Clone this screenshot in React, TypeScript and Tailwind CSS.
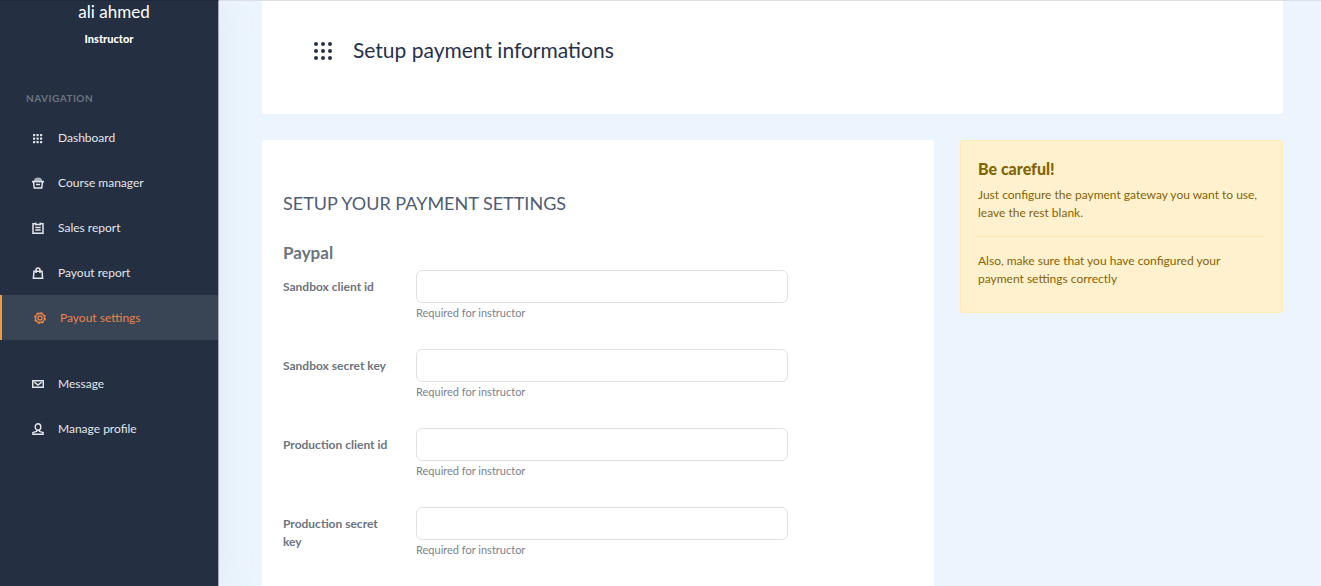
import React from 'react';

type IconProps = { className?: string };

// 3x3 dot grid of the page header
const DotsIcon: React.FC<IconProps> = ({ className }) => (
  <svg viewBox="0 0 18 18" fill="currentColor" className={className} aria-hidden="true">
    {[2, 9, 16].map((y) => [2, 9, 16].map((x) => <circle key={`${x}-${y}`} cx={x} cy={y} r="2" />))}
  </svg>
);

const GridIcon: React.FC = () => (
  <svg viewBox="0 0 12 12" fill="currentColor" className="size-3" aria-hidden="true">
    {[2, 5.5, 9].map((y) => [1, 4.5, 8].map((x) => <rect key={`${x}-${y}`} x={x} y={y} width="2.2" height="2.2" rx="0.4" />))}
  </svg>
);

const BasketIcon: React.FC = () => (
  <svg viewBox="0 0 12 12" className="size-3" aria-hidden="true">
    <path d="M1.800 4C2 1.500 3.700.5 6 .5s4 1 4.200 3.500z" fill="currentColor" opacity="0.7" />
    <path d="M0 4.600h12" stroke="currentColor" strokeWidth="1.600" />
    <path d="M1.400 4.500l.9 6.600h7.400l.9-6.600M4 7.600h4" fill="none" stroke="currentColor" strokeWidth="1.500" />
  </svg>
);

const ClipboardIcon: React.FC = () => (
  <svg viewBox="0 0 12 12" fill="none" stroke="currentColor" className="size-3" aria-hidden="true">
    <path d="M3.500 1.700H1v9.600h10V1.700H8.500" strokeWidth="1.500" />
    <path d="M3.800.5v3M8.200.5v3M4.500 2.500h3M3.300 5.500h5.400M3.300 8h5.400" strokeWidth="1.400" />
  </svg>
);

const BagIcon: React.FC = () => (
  <svg viewBox="0 0 12 12" fill="none" stroke="currentColor" strokeWidth="1.500" className="size-3" aria-hidden="true">
    <path d="M2 4.300h8l.6 6.900H1.400z" />
    <path d="M4 6V3a2 2 0 0 1 4 0v3" />
  </svg>
);

const GearIcon: React.FC = () => (
  <svg viewBox="0 0 12 12" fill="none" stroke="currentColor" className="size-3" aria-hidden="true">
    <circle cx="6" cy="6" r="4.500" strokeWidth="1.400" />
    <circle cx="6" cy="6" r="5.300" strokeWidth="1.300" strokeDasharray="2.200 1.960" />
    <circle cx="6" cy="6" r="2" strokeWidth="1.300" />
  </svg>
);

const MailIcon: React.FC = () => (
  <svg viewBox="0 0 12 12" fill="none" stroke="currentColor" strokeWidth="1.500" className="size-3" aria-hidden="true">
    <path d="M.7 2.700h10.600v6.600H.7z" />
    <path d="M2.300 4.200L6 7l3.700-2.800" />
  </svg>
);

const ProfileIcon: React.FC = () => (
  <svg viewBox="0 0 12 12" fill="none" stroke="currentColor" strokeWidth="1.400" className="size-3" aria-hidden="true">
    <ellipse cx="6" cy="4" rx="2.800" ry="3.200" />
    <path d="M4.700 7v1.300L.9 9.500v1.700h10.200V9.500L7.300 8.300V7" />
  </svg>
);

const navItems = [
  { label: 'Dashboard', icon: GridIcon },
  { label: 'Course manager', icon: BasketIcon },
  { label: 'Sales report', icon: ClipboardIcon },
  { label: 'Payout report', icon: BagIcon },
  { label: 'Payout settings', icon: GearIcon, active: true },
];

const accountItems = [
  { label: 'Message', icon: MailIcon },
  { label: 'Manage profile', icon: ProfileIcon },
];

const fields = [
  { id: 'sandbox_client_id', label: 'Sandbox client id' },
  { id: 'sandbox_secret_key', label: 'Sandbox secret key' },
  { id: 'production_client_id', label: 'Production client id' },
  { id: 'production_secret_key', label: 'Production secret key' },
];

interface NavItemProps {
  label: string;
  icon: React.FC;
  active?: boolean;
}

const NavItem: React.FC<NavItemProps> = ({ label, icon: Icon, active }) => (
  <li>
    <a
      href="#"
      aria-current={active ? 'page' : undefined}
      className={
        active
          ? 'flex h-[45px] items-center gap-[14px] border-l-2 border-[#f09a3e] bg-[#394455] pt-px pl-8 text-xs text-[#e8854a]'
          : 'flex h-[45px] items-center gap-[14px] pt-px pl-8 text-xs text-[#e3e6ea] hover:text-white'
      }
    >
      <Icon />
      <span>{label}</span>
    </a>
  </li>
);

const Sidebar: React.FC = () => (
  <aside className="w-[219px] shrink-0 border-t border-r border-t-[#1f293a] border-r-[#a5adb8] bg-[#242f42] shadow-[0_0_35px_0_rgba(154,161,171,0.15)]">
    <div className="text-center text-white">
      <p className="pl-[10px] text-[17px] leading-[22px]">ali ahmed</p>
      <p className="mt-2 text-[11px] leading-4 font-black">Instructor</p>
    </div>
    <nav className="mt-[43px]">
      <h2 className="px-[26px] text-[10px] leading-4 font-bold tracking-wider text-[#6c757d] uppercase">Navigation</h2>
      <ul className="mt-[9px]">
        {navItems.map((item) => (
          <NavItem key={item.label} {...item} />
        ))}
      </ul>
      <ul className="mt-[21px]">
        {accountItems.map((item) => (
          <NavItem key={item.label} {...item} />
        ))}
      </ul>
    </nav>
  </aside>
);

const PaymentForm: React.FC = () => (
  <form className="col-span-2 rounded-[3px] bg-white px-[21px] pt-[50px] pb-12">
    <h2 className="text-lg leading-[26px] text-[#4f5d73] uppercase">Setup your payment settings</h2>
    <h3 className="mt-[26px] text-[17px] leading-[22px] font-bold text-[#6c757d]">Paypal</h3>
    <div className="mt-[6px] flex flex-col gap-[28px]">
      {fields.map((field) => (
        <div key={field.id} className="flex items-start">
          <label
            htmlFor={field.id}
            className="w-[133px] shrink-0 pt-2 pr-5 text-xs leading-[18px] font-bold text-[#6c757d]"
          >
            {field.label}
          </label>
          <div className="w-[59%]">
            <input
              id={field.id}
              type="text"
              className="block h-[33px] w-full rounded-md border border-[#dee2e6] bg-white px-3 text-[13px] text-[#6c757d] outline-none focus:border-[#c8cbcf]"
            />
            <small className="mt-[2px] block text-[11px] leading-4 text-[#7b838a]">Required for instructor</small>
          </div>
        </div>
      ))}
    </div>
  </form>
);

const CarefulNotice: React.FC = () => (
  <div
    role="alert"
    className="self-start rounded-[3px] border border-[#ffebb3] bg-[#fff1ce] px-[17px] pt-[17px] pb-6 text-xs leading-[18px] text-[#856404]"
  >
    <h4 className="text-base leading-[22px] font-black">Be careful!</h4>
    <p className="mt-[6px]">Just configure the payment gateway you want to use, leave the rest blank.</p>
    <hr className="mt-[14px] mb-[15px] border-[#ffe9ae]" />
    <p>Also, make sure that you have configured your payment settings correctly</p>
  </div>
);

const App: React.FC = () => {
  return (
    <div className="flex h-screen overflow-hidden bg-[#ecf5fd] font-['Lato','Liberation_Sans',sans-serif]">
      <Sidebar />
      <main className="min-w-0 flex-1 border-t border-[#dcdfe3] pr-[38px] pl-[43px]">
        {/* page title */}
        <header className="flex items-start gap-[21px] rounded-b-[3px] bg-white px-[52px] pt-[34px] pb-[49px] text-[#25324a]">
          <DotsIcon className="mt-[7px] size-[18px]" />
          <h1 className="text-[21px] leading-[30px]">Setup payment informations</h1>
        </header>

        <div className="mt-[26px] grid grid-cols-3 gap-[26px]">
          <PaymentForm />
          <CarefulNotice />
        </div>
      </main>
    </div>
  );
};

export default App;
